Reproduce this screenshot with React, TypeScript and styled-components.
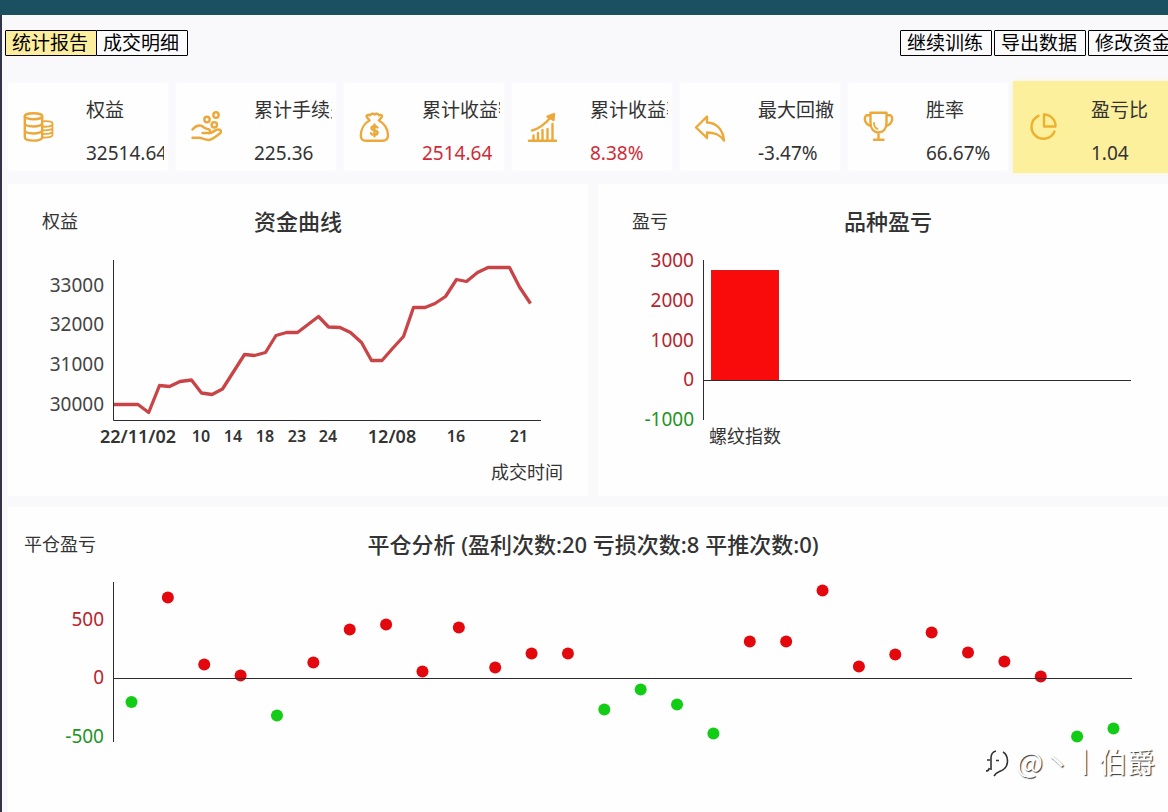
import React from "react";
import styled, { createGlobalStyle } from "styled-components";

const GlobalStyle = createGlobalStyle`
  * { box-sizing: border-box; }
  body {
    margin: 0;
    overflow: hidden;
    background: #f9f9fb;
    color: #333;
    font-family: "Noto Sans", "Noto Sans CJK SC", sans-serif;
  }
`;

const Page = styled.div`
  position: relative;
  display: flex;
  flex-direction: column;
  min-height: 100vh;
  overflow: hidden;
`;

const TitleBar = styled.div`
  height: 15px;
  background: #1b5061;
`;

const Body = styled.main`
  flex: 1;
  display: flex;
  flex-direction: column;
  border-left: 2px solid #33344a;
  padding: 15px 0 0 6px;
`;

const Toolbar = styled.nav`
  display: flex;
  justify-content: space-between;
  min-width: 1175px;
  margin: 0 0 27px -3px;
`;

const ButtonGroup = styled.div<{ $joined?: boolean }>`
  display: flex;
  gap: ${(p) => (p.$joined ? "0" : "2px")};
  button + button {
    margin-left: ${(p) => (p.$joined ? "-1px" : "0")};
  }
`;

const ToolButton = styled.button<{ $active?: boolean }>`
  height: 26px;
  padding: 0 8px 0 6px;
  border: 1px solid #000;
  border-radius: 1px;
  background: ${(p) => (p.$active ? "#fcee9e" : "#fbfbfd")};
  color: #000;
  font-family: inherit;
  font-size: 19px;
  line-height: 22px;
  white-space: nowrap;
`;

const Stats = styled.section`
  display: grid;
  grid-template-columns: repeat(7, minmax(160px, 1fr));
  gap: 8px;
  min-width: 1168px;
  margin-bottom: 13px;
`;

const StatCard = styled.article<{ $active?: boolean }>`
  display: flex;
  align-items: center;
  height: ${(p) => (p.$active ? "92px" : "88px")};
  margin: ${(p) => (p.$active ? "-2px -3px" : "0")};
  padding: 0 4px 0 14px;
  background: ${(p) => (p.$active ? "#fdf09c" : "#fefefe")};
  box-shadow: 0 0 4px ${(p) => (p.$active ? "#fdf6cf" : "#fcfcfd")};

  svg {
    flex: none;
    width: 32px;
    height: 32px;
    margin-right: 32px;
    fill: none;
    stroke: ${(p) => (p.$active ? "#eeb02f" : "#eda83a")};
    stroke-width: 2.4;
    stroke-linecap: round;
    stroke-linejoin: round;
  }
`;

const StatText = styled.div`
  flex: 1;
  min-width: 0;
  overflow: hidden;
  display: flex;
  flex-direction: column;
  gap: 15px;
  padding-top: 8px;
  font-size: 19px;
  line-height: 28px;
  white-space: nowrap;
`;

const StatValue = styled.strong<{ $gain?: boolean }>`
  font-weight: 400;
  color: ${(p) => (p.$gain ? "#cf2b36" : "#333")};
`;

const Panels = styled.div`
  flex: 1;
  display: grid;
  grid-template-columns: 1fr 1fr;
  grid-template-rows: auto 1fr;
  gap: 11px 10px;
  min-width: 1170px;
`;

const Panel = styled.section<{ $wide?: boolean }>`
  grid-column: ${(p) => (p.$wide ? "1 / -1" : "auto")};
  min-width: 0;
  padding-top: 22px;
  background: #fefefe;

  svg {
    display: block;
    width: 100%;
  }
`;

const PanelHeader = styled.header`
  display: grid;
  grid-template-columns: 104px 1fr 104px;
  height: 32px;
  line-height: 30px;
  text-align: center;
`;

const AxisName = styled.span`
  font-size: 18px;
`;

const PanelTitle = styled.h2`
  margin: 0;
  font-size: 22px;
  font-weight: 500;
`;

const Axis = styled.path`
  fill: none;
  stroke: #2b2b33;
  stroke-width: 1;
`;

const Tick = styled.text<{ $tone?: "up" | "down" }>`
  font-size: 19px;
  text-anchor: end;
  fill: ${(p) => (p.$tone === "up" ? "#b8242c" : p.$tone === "down" ? "#1e9425" : "#444")};
`;

const DateTick = styled.text<{ $major?: boolean }>`
  font-size: ${(p) => (p.$major ? "18px" : "16px")};
  font-weight: 600;
  text-anchor: middle;
  fill: #333;
`;

const Caption = styled.text`
  font-size: 18px;
  text-anchor: middle;
  fill: #333;
`;

const Signature = styled.div`
  position: absolute;
  right: 13px;
  bottom: 33px;
  display: flex;
  align-items: center;
  gap: 6px;
  color: #fff;
  font-family: "Noto Sans CJK SC", sans-serif;
  font-size: 28px;
  line-height: 32px;
  text-shadow: 1px 1px 1px #333;

  svg {
    width: 28px;
    height: 36px;
    fill: none;
  }
`;

const CoinsIcon = () => (
  <svg viewBox="0 0 32 32" aria-hidden="true">
    <ellipse cx="11.5" cy="5.3" rx="8.7" ry="3" />
    <path d="M2.8 5.3v21c0 4.4 17.4 4.4 17.4 0v-21M2.8 12.3c0 4.2 17.4 4.2 17.4 0M2.8 19.3c0 4.2 17.4 4.2 17.4 0" />
    <path d="M20.5 10.3c4-.6 10 0 10 2v11.6c0 2-5 3-10 2.5M20.5 15.6c5 .5 10-.5 10-2.3M20.5 19.2c5 .5 10-.5 10-2.3M20.5 22.8c5 .5 10-.5 10-2.3" strokeWidth="1.8" />
  </svg>
);

const HandIcon = () => (
  <svg viewBox="0 0 32 32" aria-hidden="true">
    <circle cx="26" cy="4" r="2.7" />
    <circle cx="17" cy="8.5" r="2.7" />
    <circle cx="24.3" cy="13.8" r="2.7" />
    <path d="M2.5 18.5C5 15.5 8 13.8 11 14.7C13.5 15.6 15 18 18.5 18.3C20.5 18.6 20.8 21.8 18 22H12.5M18.5 22.2C22.5 22.5 25 18.6 28 18.4C31.5 18.4 31.8 20.8 29.5 22.7C26.5 25 22.5 28.8 19 29C14.5 29 12 26.8 9 26.7H2.5" />
  </svg>
);

const BagIcon = () => (
  <svg viewBox="0 0 32 32" aria-hidden="true">
    <path d="M11.5 9.5L8.5 5.5C8.5 3.5 10.5 3.5 12 4.3C13.3 2.3 15.3 2.3 16.5 3.5C18 2.3 20 2.5 21 4.3C22.8 3.5 24.5 4 24 5.7L20.8 9.5C26 12 30 18 30 24C30 28 28 29.8 24.500 29.8H8C4.5 29.8 2.8 28 2.8 24.5C3 18 6.5 12 11.5 9.5" />
    <path d="M19.5 16.5C18.5 14.8 13.5 14.6 13.5 17.3C13.5 20 19.6 18.6 19.6 21.6C19.6 24.5 14 24.5 12.9 22.3M16.5 13.5V25.3" />
  </svg>
);

const GrowthIcon = () => (
  <svg viewBox="0 0 32 32" aria-hidden="true">
    <path d="M3 29.700H30M7.5 29V24.5M12 29V22M16.5 29V19M21.5 29V18M26.5 29V13M6 19.5C14 17.5 20 12 25 6" />
    <path d="M21.5 5.5L28 3L27.5 9Z" fill="#eda83a" />
  </svg>
);

const ReturnIcon = () => (
  <svg viewBox="0 0 32 32" aria-hidden="true">
    <path d="M2 16.5L13 5.5V11.5C22 11.7 29 18 30 29.5C25.5 23.500 21 21.5 13 21.5V27Z" />
  </svg>
);

const TrophyIcon = () => (
  <svg viewBox="0 0 32 32" aria-hidden="true">
    <path d="M8.5 1.8H24.5V12C24.5 18 21 21.5 16.5 21.5C12 21.5 8.5 18 8.5 12ZM8.5 4.3H4.5C1.5 6.500 2.5 13.5 9 15M24.5 4.3H28.5C31.5 6.5 30.5 13.5 24 15M16.5 21.5V28.5M12 28.8H21.5" />
    <path d="M12 12C12 15 13.5 17 15.5 18" strokeWidth="1.8" />
  </svg>
);

const PieIcon = () => (
  <svg viewBox="0 0 32 32" aria-hidden="true">
    <path d="M11.5 4.8A12 12 0 1 0 27.5 20.5" />
    <path d="M17 3.5A11.5 11.5 0 0 1 28.5 15.5H17Z" />
  </svg>
);

const stats = [
  { label: "权益", value: "32514.64", Icon: CoinsIcon },
  { label: "累计手续费", value: "225.36", Icon: HandIcon },
  { label: "累计收益额", value: "2514.64", Icon: BagIcon, gain: true },
  { label: "累计收益率", value: "8.38%", Icon: GrowthIcon, gain: true },
  { label: "最大回撤", value: "-3.47%", Icon: ReturnIcon },
  { label: "胜率", value: "66.67%", Icon: TrophyIcon },
  { label: "盈亏比", value: "1.04", Icon: PieIcon, active: true },
];

const equityLine =
  "106,166.5 130,166.5 140.7,174.5 151.5,147.5 161.5,148.5 172,143.5 183.5,142 193.5,155 204,156.5 214.5,151 236.5,116.5 246.5,117.5 257.5,114.5 268,97.5 278.5,94.5 289.5,94.5 310.5,78.5 320.5,89 332,89.5 342.5,94.5 353.5,104.5 363.5,122.5 374,122.5 384.5,110.5 395.5,98.5 405.5,69.5 417,69.5 427,65.5 437.5,58.5 448.5,41.5 458.5,43.5 469.5,34.5 480,29.5 501.5,29.5 511.5,49 522.5,65.5";

const equityDates = [
  { x: 130, text: "22/11/02", major: true },
  { x: 193, text: "10" },
  { x: 225, text: "14" },
  { x: 257, text: "18" },
  { x: 289, text: "23" },
  { x: 320, text: "24" },
  { x: 384, text: "12/08", major: true },
  { x: 448, text: "16" },
  { x: 511, text: "21" },
];

const trades = [
  -200, 692, 120, 26, -316, 137, 419, 462, 60, 436, 94, 214, 214, -265, -94, -222, -470, 316, 316,
  752, 103, 205, 393, 222, 145, 17, -496, -427,
];

const tradeX = (i: number) => 123.5 + i * 36.37;
const tradeY = (v: number) => 117.5 - v * 0.117;

const EquityChart = () => (
  <svg viewBox="0 0 580 258" role="img" aria-label="资金曲线">
    {[33000, 32000, 31000, 30000].map((v, i) => (
      <Tick key={v} x="96" y={Math.floor(54 + i * 39.7)}>
        {v}
      </Tick>
    ))}
    <Axis d="M105.5 22V182.5H533" />
    <polyline points={equityLine} fill="none" stroke="#c94447" strokeWidth="3.3" strokeLinejoin="round" />
    {equityDates.map((d) => (
      <DateTick key={d.text} x={d.x} y={d.major ? 205 : 204} $major={d.major}>
        {d.text}
      </DateTick>
    ))}
    <Caption x="519" y="241">
      成交时间
    </Caption>
  </svg>
);

const ProductChart = () => (
  <svg viewBox="0 0 580 258" role="img" aria-label="品种盈亏">
    {[3000, 2000, 1000, 0, -1000].map((v, i) => (
      <Tick key={v} x="96" y={Math.round(29 + i * 39.8)} $tone={v < 0 ? "down" : "up"}>
        {v}
      </Tick>
    ))}
    <rect x="113.5" y="32.5" width="67" height="110" fill="#f90b0b" stroke="#dc1a1a" />
    <Axis d="M105.5 22V182M105.5 142.5H533" />
    <Caption x="147" y="205">
      螺纹指数
    </Caption>
  </svg>
);

const TradeChart = () => (
  <svg viewBox="0 0 1170 251" role="img" aria-label="平仓分析">
    {[500, 0, -500].map((v, i) => (
      <Tick key={v} x="96" y={Math.round(65 + i * 58.4)} $tone={v < 0 ? "down" : "up"}>
        {v}
      </Tick>
    ))}
    {trades.map((v, i) => (
      <circle key={i} cx={tradeX(i)} cy={tradeY(v)} r="6" fill={v < 0 ? "#12cc16" : "#e3080e"} />
    ))}
    <Axis d="M105.5 21V181M105.5 117.5H1124" />
  </svg>
);

export default function App() {
  return (
    <Page>
      <GlobalStyle />
      <TitleBar />
      <Body>
        <Toolbar>
          <ButtonGroup $joined>
            <ToolButton $active>统计报告</ToolButton>
            <ToolButton>成交明细</ToolButton>
          </ButtonGroup>
          <ButtonGroup>
            <ToolButton>继续训练</ToolButton>
            <ToolButton>导出数据</ToolButton>
            <ToolButton>修改资金</ToolButton>
          </ButtonGroup>
        </Toolbar>
        <Stats>
          {stats.map(({ label, value, Icon, gain, active }) => (
            <StatCard key={label} $active={active}>
              <Icon />
              <StatText>
                <span>{label}</span>
                <StatValue $gain={gain}>{value}</StatValue>
              </StatText>
            </StatCard>
          ))}
        </Stats>
        <Panels>
          <Panel>
            <PanelHeader>
              <AxisName>权益</AxisName>
              <PanelTitle>资金曲线</PanelTitle>
            </PanelHeader>
            <EquityChart />
          </Panel>
          <Panel>
            <PanelHeader>
              <AxisName>盈亏</AxisName>
              <PanelTitle>品种盈亏</PanelTitle>
            </PanelHeader>
            <ProductChart />
          </Panel>
          <Panel $wide>
            <PanelHeader>
              <AxisName>平仓盈亏</AxisName>
              <PanelTitle>平仓分析 (盈利次数:20 亏损次数:8 平推次数:0)</PanelTitle>
            </PanelHeader>
            <TradeChart />
          </Panel>
        </Panels>
      </Body>
      <Signature>
        <svg viewBox="0 0 28 36" aria-hidden="true">
          <path d="M13 8C9 9 8 11 8 15V27M3 28C5 28 6 27 6.500 25M4 17H7M13 17.500H16M20 9C25.500 12 26 22 21 26C17 29.500 14 28 11 33" stroke="#333" strokeWidth="1.6" />
        </svg>
        <span>@丶丨伯爵</span>
      </Signature>
    </Page>
  );
}
